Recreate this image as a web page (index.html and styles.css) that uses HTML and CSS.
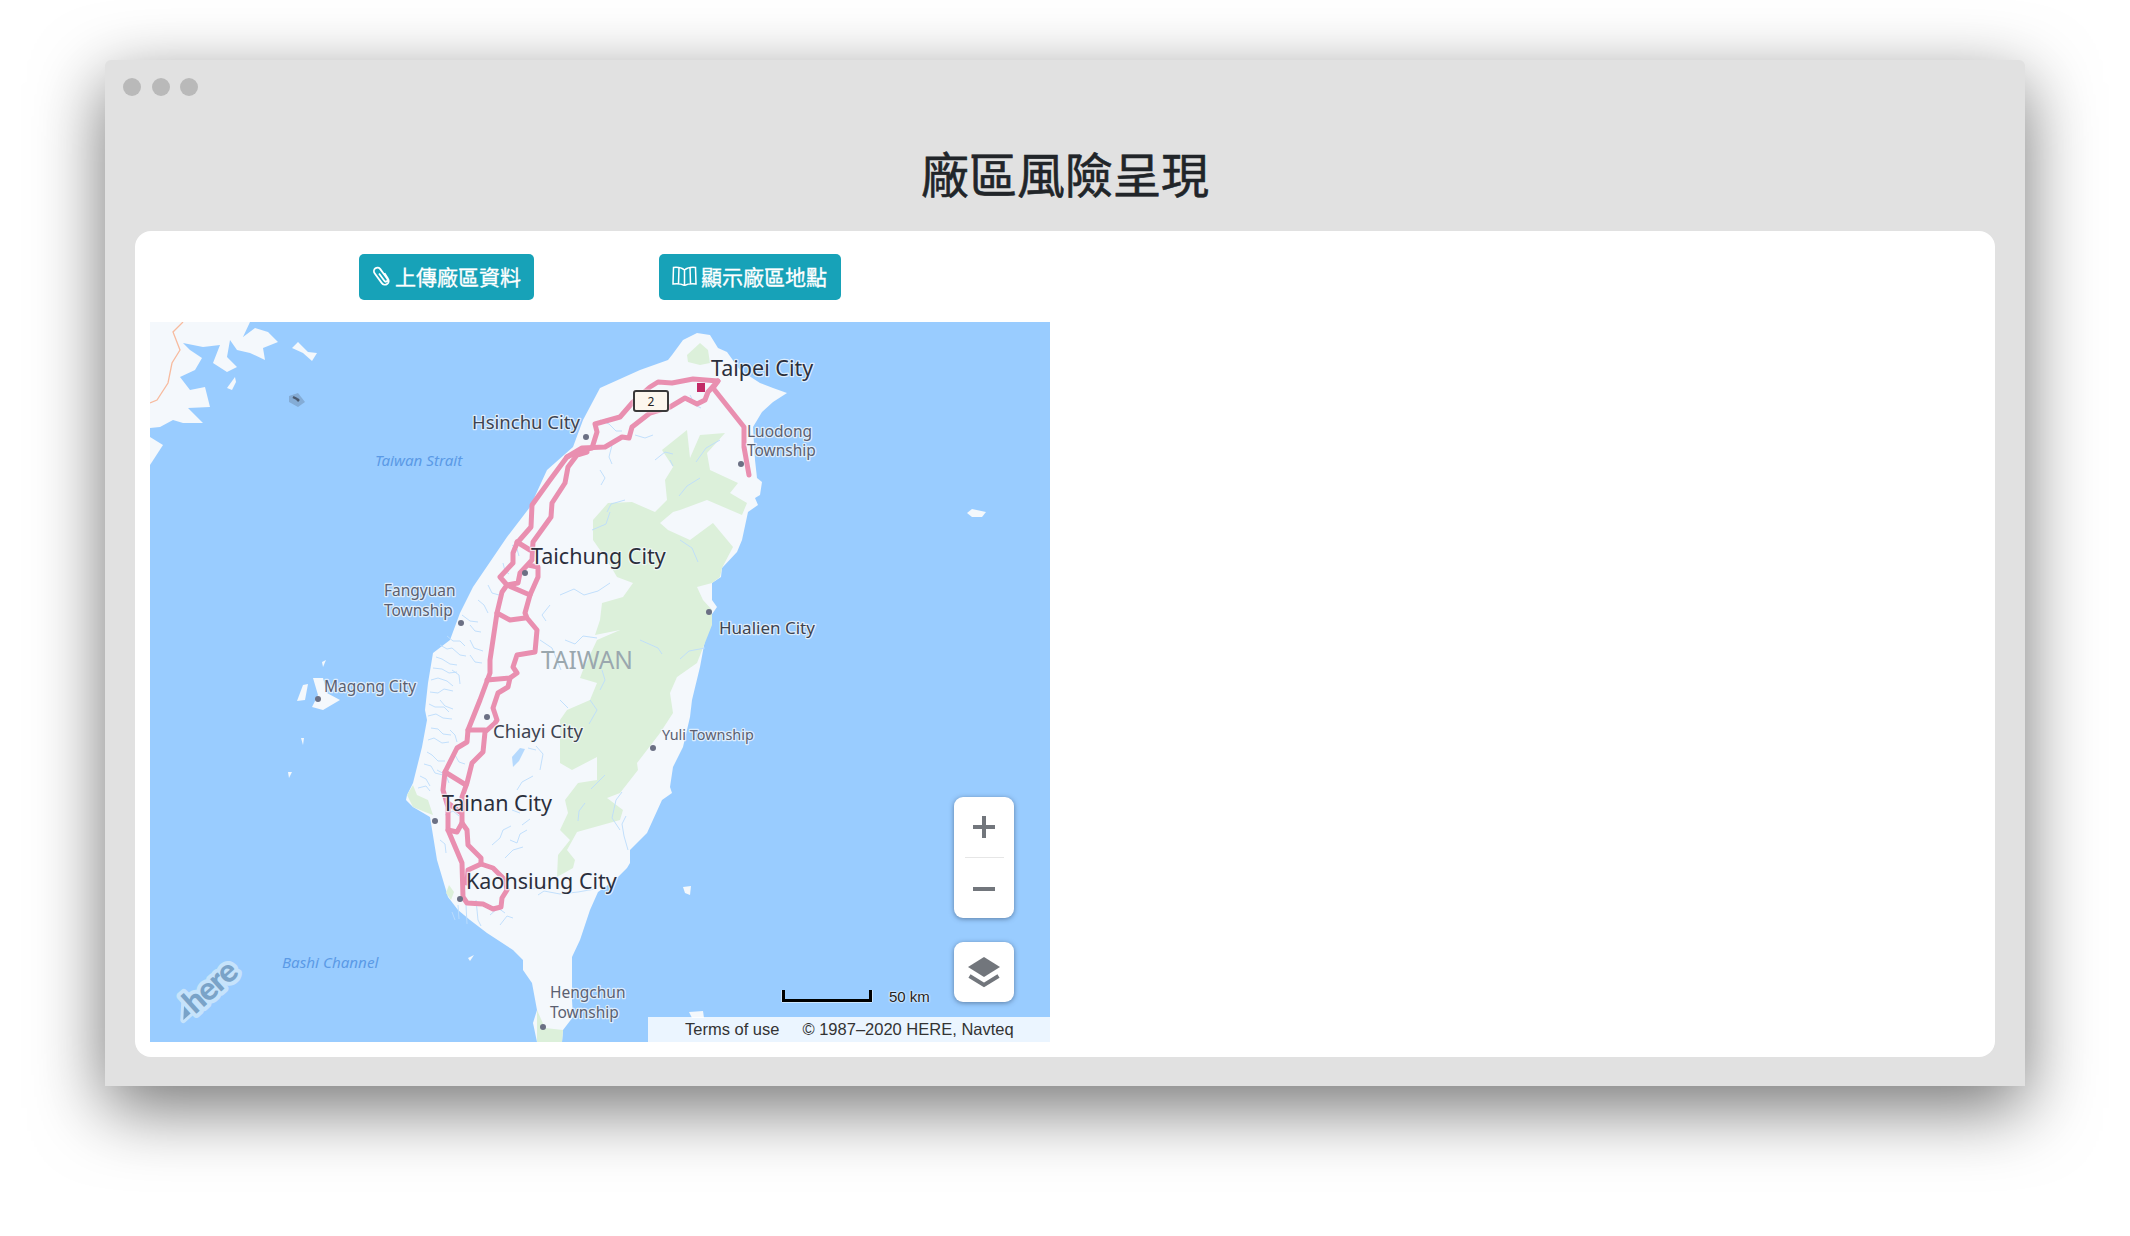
FILE: index.html
```html
<!DOCTYPE html>
<html lang="zh-Hant">
<head>
    <meta charset="UTF-8">
    <meta name="viewport" content="width=device-width, initial-scale=1.0">
    <title>廠區風險呈現</title>
    <link rel="stylesheet" href="styles.css">
</head>
<body>
    <div class="window">
        <div class="dots"><span></span><span></span><span></span></div>
        <h1>廠區風險呈現</h1>
        <div class="card">
            <div class="actions">
                <button type="button" class="btn">
                    <svg class="btn-icon" viewBox="0 0 18 20"><path d="M7 7.500 12.300 14.800a1.800 1.800 0 0 0 3-2.100L8.300 3.100a3.500 3.500 0 0 0-5.700 4.100l7.200 9.900a3.800 3.800 0 0 0 6.200-4.400L12.500 7.200"/></svg>
                    上傳廠區資料
                </button>
                <button type="button" class="btn btn-wide">
                    <svg class="btn-icon btn-icon-map" viewBox="0 0 25 20"><path d="M12.500 4C10 2 6 1 1.500 1.500L1 18c4.500-.5 9 .2 11.500 1.500C15 18.200 19.500 17.500 24 18L23.500 1.500C19 1 15 2 12.500 4zM12.500 4V19.500M7 1.200 6.500 17.500M18 1.200 18.500 17.500"/></svg>
                    顯示廠區地點
                </button>
            </div>
            <div class="map">
                <svg class="map-canvas" viewBox="150 322 900 720">
                    <g class="land">
                        <path d="M150 322H250L243 337 255 328 268 332 278 342 263 348 265 360 250 353 237 350 230 340 227 357 237 367 227 372 213 363 220 345 203 347 183 343 190 350 202 358 195 370 180 377 190 390 205 387 210 407 188 408 203 423 183 423 173 420 160 427 150 428Z"/>
                        <path d="M150 437 163 445 150 465Z"/>
                        <path d="M292 348 298 342 308 352 317 353 312 361 303 353Z"/>
                        <path d="M235 377 227 388 232 390 236 382Z"/>
                        <path d="M672 355 683 340 697 333 710 335 718 348 727 352 740 370 760 383 773 388 787 393 773 402 762 412 753 427 755 460 757 478 762 482 760 495 755 498 758 505 748 512 742 540 737 552 722 568 721 577 712 583 712 600 717 607 710 617 705 640 700 667 692 700 690 717 683 747 673 767 670 787 672 793 662 800 647 833 630 850 630 863 627 868 615 880 598 892 590 910 580 940 572 957 572 1000 573 1017 563 1030 562 1042H537L533 1023 537 1010 532 983 523 970 523 960 513 950 487 933 470 920 458 910 448 897 437 860 430 817 413 807 406 800 407 795 413 783 422 747 427 720 425 710 428 683 433 653 450 640 460 613 473 587 490 562 507 537 530 507 547 470 573 447 583 420 600 388 640 370 668 360Z"/>
                        <path d="M313 678 323 678 327 693 340 700 323 710 312 707 318 695Z"/>
                        <path d="M303 685 308 684 305 700 297 701Z"/>
                        <path d="M322 662 326 660 323 667Z"/>
                        <path d="M301 738 304 738 303 745Z"/>
                        <path d="M288 772 292 772 289 778Z"/>
                        <path d="M967 513 972 509 986 512 982 517 972 517Z"/>
                        <path d="M468 958 474 955 470 961Z"/>
                        <path d="M683 887 691 886 690 895 685 893Z"/>
                        <path d="M689 1012 703 1011 704 1018 692 1018Z"/>
                    </g>
                    <path class="border" d="M183 322 173 332 180 350 172 363 168 383 157 400 150 403"/>
                    <path class="reef" d="M289 396 298 393 305 402 298 407 289 402Z"/>
                    <path class="reef-dot" d="M293 397 297 399M297 399 299 401"/>
                    <g class="forest">
                        <path d="M687 355 700 343 708 350 710 363 700 365 688 362Z"/>
                        <path d="M662 450 687 430 690 458 700 435 725 433 707 453 710 470 738 483 730 493 747 503 742 515 707 500 680 510 673 512 660 523 668 530 690 540 713 523 733 547 722 568 720 577 712 583 697 587 703 600 712 610 712 625 697 663 677 677 670 693 673 713 660 733 647 750 637 763 638 770 620 793 607 798 623 810 620 820 577 832 567 850 575 860 573 868 557 877 558 855 570 840 560 830 568 813 565 800 578 783 597 780 597 757 572 770 560 763 560 720 567 710 590 700 597 683 587 680 580 678 583 670 597 640 620 630 595 635 600 620 602 603 623 597 633 583 617 577 607 560 593 540 593 520 608 503 632 502 655 512 667 500 665 480 673 467Z"/>
                        <path d="M407 795 413 785 417 795 428 800 433 815 425 812 413 807Z"/>
                        <path d="M537 1010 545 1028 563 1030 562 1042H537Z"/>
                        <path d="M449 885 454 892 451 900 446 893Z"/>
                    </g>
                    <path class="river" d="M440 645l7 4 5-1 8 7 6 1M447 636l6 5 7 0 5 5M436 657l6 2 8 5 7 1M433 668l9 1 7 4 8-1M431 680l7-2 9 3 6 5M430 692l8 1 6-4 9 2M429 704l6 3 9 0 5 5M428 716l8-2 7 4 9 1M431 728l7 1 5 5 8 1M428 740l6-2 8 5 7-1M427 752l5 3 6 6 7 0M424 764l7 2 4 7 8 2M420 776l6 3 4 7M418 788l8-2 4 5M470 625l5 6 6 1M462 615l8 6 8 1M478 600l6 5 4 8M488 585l4 8 7 2M503 563l2 8 4 3M512 545l5 4 2 7M470 640l4 8 9 3M470 655l5 7 7 1M452 670l7 5 1 9M440 700l5 6 8 3M450 730l5 5 2 7M437 770l9 5 3 8M455 755l4 7 6 2M445 815l8-4 6 5M440 840l5 4 1 9M452 912l3 8M458 905l1 14M466 905l1 19M476 900l2 20 3 6M490 915l8-7 7 5M500 925l7-9 6 2M492 845l8-7 3-8 8-4M510 840l7 3 3-9 7-4M505 858l8-8 10-3M520 880l4 6 9 3 14-4M600 420l9 4 7 7 6 0M612 445l-3 12 3 7M600 470l5 8-4 7M635 435l10 3 8-3M655 460l10-8 8 2M625 500l-14 4-4 8M592 530l14-6 4-12M690 395l5 10 6 3M670 460l3 6M700 478l-13 8-8 10M720 440l-14 8-10 14M560 595l14-6 10 6 14-4 12-8M565 640l10 4 8-8 14 2M550 605l-8 10 4 6M602 670l3 10-5 10M590 700l7 10-8 14M680 540l12 8 6 14M705 648l-16 3-9 8M640 640l18 8 4 6M620 830l-8-12 4-18 6-8M628 850l-4-14-2-12 4-8M540 640l12 8 9 22M560 700l8 8M517 790l5-8 11-6M522 825l8-6M512 810l8 3M540 770l3-16-7-8M528 748l8 2M538 895l6-4 16 3 18-2 17-3M585 803l-6 8-1 10M605 775l-14 14"/>
                    <path class="lake" d="M512 757l8-9 5 1-6 12-6 6Z"/>
                    <g class="roads">
                        <path d="M749 475 744 447 744 427 713 388 718 381 693 379 672 383 658 382 650 387 633 402 620 417 595 424 597 432 592 448 582 450 567 457 550 480 532 505 531 527 517 543 513 553 513 563 500 577 507 585 502 592 497 613 490 660 490 673 480 700 468 730 467 742 457 748 445 772 443 790 448 807 448 830 462 863 463 897 467 903 483 904 493 909 501 907 502 898 507 890 505 880 493 868 481 864 468 870 467 883"/>
                        <path d="M718 381 708 392 705 400 697 404 685 398 670 407 650 413 632 427 629 438 622 437 605 447 582 448 567 457"/>
                        <path d="M587 452 577 455 568 467 565 483 552 503 551 517 533 542 532 560 520 573 518 583 507 585 530 595 538 577 538 567 528 565 532 560"/>
                        <path d="M517 542 530 550"/>
                        <path d="M530 595 525 613 527 618 537 630 535 652 517 655 513 667 517 673 510 678 487 680"/>
                        <path d="M497 613 510 620 525 618"/>
                        <path d="M510 678 508 687 498 693 493 708 497 720 495 723 485 732 483 752 472 763 467 783 462 797 462 823 467 830 468 845 481 858 481 864"/>
                        <path d="M468 730 485 730"/>
                        <path d="M445 772 466 785"/>
                        <path d="M462 823 457 832 448 830"/>
                        <path d="M448 803 460 812"/>
                    </g>
                    <rect class="marker" x="697" y="383" width="8" height="9"/>
                    <g class="places">
                        <circle cx="586" cy="437" r="3"/><circle cx="741" cy="464" r="3"/>
                        <circle cx="525" cy="573" r="3"/><circle cx="461" cy="623" r="3"/>
                        <circle cx="318" cy="699" r="3"/><circle cx="487" cy="717" r="3"/>
                        <circle cx="709" cy="612" r="3"/><circle cx="653" cy="748" r="3"/>
                        <circle cx="435" cy="821" r="3"/><circle cx="460" cy="899" r="3"/>
                        <circle cx="543" cy="1027" r="3"/>
                    </g>
                    <rect class="shield" x="634" y="391" width="34" height="20" rx="2"/>
                    <text class="shield-num" x="651" y="406">2</text>
                    <g class="labels">
                        <text class="city" x="711" y="376">Taipei City</text>
                        <text class="city" x="531" y="564">Taichung City</text>
                        <text class="city" x="442" y="811">Tainan City</text>
                        <text class="city" x="466" y="889">Kaohsiung City</text>
                        <text class="town" x="472" y="429">Hsinchu City</text>
                        <text class="town" x="493" y="738">Chiayi City</text>
                        <text class="hualien" x="719" y="634">Hualien City</text>
                        <text class="small dim" x="747" y="437">Luodong</text>
                        <text class="small dim" x="747" y="456">Township</text>
                        <text class="small dim" x="384" y="596">Fangyuan</text>
                        <text class="small dim" x="384" y="616">Township</text>
                        <text class="small dim" x="324" y="692">Magong City</text>
                        <text class="small dim" x="550" y="998">Hengchun</text>
                        <text class="small dim" x="550" y="1018">Township</text>
                        <text class="tiny" x="662" y="740">Yuli Township</text>
                        <text class="country" x="541" y="669">TAIWAN</text>
                        <text class="water" x="375" y="466">Taiwan Strait</text>
                        <text class="water" x="282" y="968">Bashi Channel</text>
                    </g>
                    <g class="here" transform="rotate(-42 194 1005)">
                        <path class="here-tri" d="M176 1009 188 997 188 1009Z"/>
                        <text x="188" y="1013">here</text>
                    </g>
                    <path class="scale-back" d="M782 990V1002H872V990"/>
                    <path class="scale-line" d="M783.500 990V1000.500H870.500V990"/>
                </svg>
                <span class="scale-label">50 km</span>
                <div class="zoom-box">
                    <svg class="zoom-icon" viewBox="0 0 22 22"><path d="M11 0V22M0 11H22"/></svg>
                    <hr class="zoom-line">
                    <svg class="zoom-icon" viewBox="0 0 22 22"><path d="M0 11H22"/></svg>
                </div>
                <div class="layers-box">
                    <svg class="layers-icon" viewBox="0 0 36 32"><path class="layers-top" d="M2 11 18 1 34 11 18 21Z"/><path class="layers-bot" d="M3.500 20 18 29 32.500 20"/></svg>
                </div>
                <div class="map-foot"><span>Terms of use</span><span>© 1987–2020 HERE, Navteq</span></div>
            </div>
        </div>
    </div>
</body>
</html>
```

FILE: styles.css
```css
* {
    box-sizing: border-box;
}

body {
    margin: 0;
    padding: 60px 105px 150px;
    background-color: white;
    font-family: "Liberation Sans", "Noto Sans CJK TC", sans-serif;
}

.window {
    width: 1920px;
    height: 1026px;
    padding: 18px 30px 29px;
    background-color: #e1e1e1;
    border-radius: 6px 6px 0 0;
    box-shadow: 0 22px 70px rgba(0, 0, 0, 0.55);
}

.dots {
    display: flex;
    height: 18px;
    margin-left: -12px;
}

.dots span {
    width: 18px;
    height: 18px;
    margin-right: 10.500px;
    border-radius: 50%;
    background-color: #b9b9b9;
}

h1 {
    margin: 46px 0 0;
    height: 89px;
    font-family: "Noto Sans CJK TC", sans-serif;
    font-size: 48px;
    font-weight: 400;
    line-height: 60px;
    text-align: center;
    color: #212529;
    -webkit-text-stroke: 0.6px #212529;
}

.card {
    height: 826px;
    padding: 23px 15px 15px;
    background-color: white;
    border-radius: 16px;
}

.actions {
    display: flex;
    gap: 125px;
    height: 46px;
    margin-bottom: 22px;
    padding-left: 209px;
}

.btn {
    display: flex;
    align-items: center;
    justify-content: space-between;
    width: 175px;
    height: 46px;
    padding: 0 13px 2px;
    border: 0;
    border-radius: 5px;
    background-color: #17a2b8;
    color: white;
    font-family: "Noto Sans CJK TC", sans-serif;
    font-size: 21px;
    white-space: nowrap;
    -webkit-text-stroke: 0.3px white;
}

.btn-wide {
    width: 182px;
    padding: 0 14px 2px 13px;
}

.btn-icon {
    width: 18px;
    height: 20px;
    fill: none;
    stroke: white;
    stroke-width: 1.800;
}

.btn-icon-map {
    width: 25px;
    stroke-width: 1.500;
}

.map {
    position: relative;
    width: 900px;
    height: 720px;
    overflow: hidden;
    background-color: #99ccff;
}

.map-canvas {
    display: block;
    width: 900px;
    height: 720px;
}

.land path {
    fill: #f4f8fc;
}

.border {
    fill: none;
    stroke: #f7bb9f;
    stroke-width: 1.300;
}

.reef {
    fill: #84acd6;
}

.reef-dot {
    fill: none;
    stroke: #4a5a70;
    stroke-width: 2.500;
}

.forest path {
    fill: #dcf0da;
}

.river {
    fill: none;
    stroke: #bcdcfc;
    stroke-width: 0.900;
}

.lake {
    fill: #b5d9fd;
}

.roads path {
    fill: none;
    stroke: #e98fb0;
    stroke-width: 5;
    stroke-linejoin: round;
    stroke-linecap: round;
}

.marker {
    fill: #c22a66;
}

.places circle {
    fill: #6b7084;
}

.shield {
    fill: #fcf7ee;
    stroke: #3a3a3a;
    stroke-width: 2;
    filter: drop-shadow(0 0 1px white);
}

.shield-num {
    font-family: "Noto Sans", sans-serif;
    font-size: 12px;
    text-anchor: middle;
    fill: #222;
}

.labels text {
    font-family: "Noto Sans", sans-serif;
    paint-order: stroke;
    stroke: rgba(244, 248, 252, 0.75);
    stroke-width: 2.500px;
    stroke-linejoin: round;
}

.labels .city {
    font-size: 21.500px;
    fill: #2b2f3c;
}

.labels .town {
    font-size: 18.500px;
    fill: #3d4350;
}

.labels .hualien {
    font-size: 17px;
    fill: #3d4350;
}

.labels .small {
    font-size: 15.500px;
}

.labels .dim {
    fill: #5b6070;
}

.labels .tiny {
    font-size: 14.400px;
    fill: #5b6070;
}

.labels .country {
    font-size: 24.500px;
    fill: #9aa7ae;
    stroke: none;
}

.labels .water {
    font-size: 15.200px;
    font-style: italic;
    fill: #5b9ae6;
    stroke: none;
}

.here text {
    font-family: "Lato", sans-serif;
    font-size: 32px;
    font-weight: 900;
    letter-spacing: -1px;
    fill: #7aa3c8;
    paint-order: stroke;
    stroke: #c6e3fb;
    stroke-width: 8px;
    stroke-linejoin: round;
}

.here-tri {
    fill: #7aa3c8;
    stroke: #c6e3fb;
    stroke-width: 6px;
    paint-order: stroke;
    stroke-linejoin: round;
}

.scale-back {
    fill: none;
    stroke: white;
    stroke-width: 1;
}

.scale-line {
    fill: none;
    stroke: black;
    stroke-width: 3;
}

.scale-label {
    position: absolute;
    left: 739px;
    top: 666px;
    font-size: 15px;
    line-height: 18px;
    color: #222;
    text-shadow: 0 0 2px #e9f4ff, 0 0 2px #e9f4ff, 0 0 2px #e9f4ff;
}

.zoom-box,
.layers-box {
    position: absolute;
    left: 804px;
    width: 60px;
    background-color: white;
    border-radius: 9px;
    box-shadow: 0 1px 5px rgba(40, 60, 90, 0.55);
}

.zoom-box {
    top: 475px;
    height: 121px;
    display: flex;
    flex-direction: column;
    align-items: center;
    padding-top: 19px;
}

.zoom-line {
    width: 39px;
    margin: 19px 0 20px;
    border: 0;
    border-top: 1px solid #e6e6e6;
}

.zoom-icon {
    width: 22px;
    height: 22px;
    fill: none;
    stroke: #72767c;
    stroke-width: 4;
}

.layers-box {
    top: 620px;
    height: 60px;
    display: flex;
    align-items: center;
    justify-content: center;
}

.layers-icon {
    width: 36px;
    height: 32px;
}

.layers-top {
    fill: #72767c;
}

.layers-bot {
    fill: none;
    stroke: #72767c;
    stroke-width: 4;
}

.map-foot {
    position: absolute;
    left: 498px;
    right: 0;
    bottom: 0;
    height: 25px;
    display: flex;
    align-items: center;
    gap: 23px;
    padding-left: 37px;
    background-color: rgba(255, 255, 255, 0.8);
    font-size: 16.500px;
    color: #333;
}
```
